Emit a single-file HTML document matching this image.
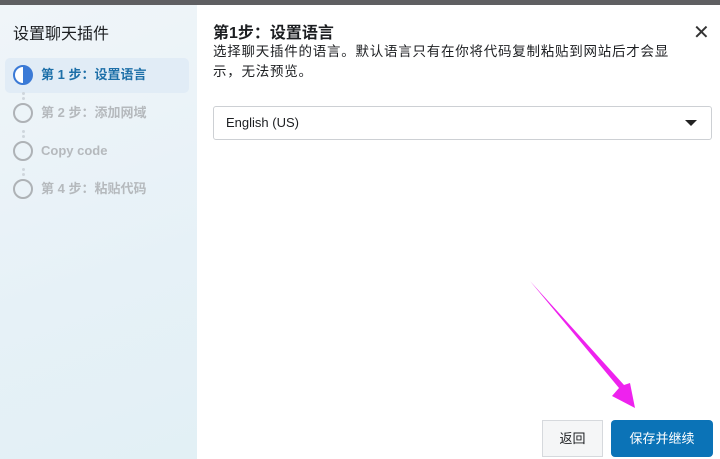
<!DOCTYPE html>
<html><head><meta charset="utf-8"><style>
body{margin:0;width:720px;height:459px;overflow:hidden;font-family:"Liberation Sans","Noto Sans CJK SC",sans-serif;background:#fff;position:relative}
.top{position:absolute;left:0;top:0;width:720px;height:5px;background:#5f5f62}
.side{position:absolute;left:0;top:5px;width:197px;height:454px;background:linear-gradient(160deg,#f0f5f9,#e6f1f7 60%,#e2f0f5)}
.st{position:absolute;left:13px;top:15px;font-size:16px;color:#1c1e21}
.step{position:absolute;left:13px;font-size:13px;font-weight:bold;color:#b5b9bd;height:20px;line-height:20px}
.c{position:absolute;left:0;top:0;width:20px;height:20px;border:2px solid #aeb2b6;border-radius:50%;box-sizing:border-box}
.lbl{position:absolute;left:28px;white-space:nowrap}
.act{position:absolute;left:5px;top:53px;width:184px;height:35px;background:#e1ecf6;border-radius:5px}
.dot{position:absolute;left:22px;width:3px;height:3px;border-radius:50%;background:#cfd6dc}
h1{position:absolute;left:213px;top:19px;margin:0;font-size:16px;font-weight:bold;color:#1c1e21}
.desc{position:absolute;left:213px;top:42px;white-space:nowrap;font-size:13.5px;letter-spacing:0.75px;line-height:20px;color:#1c1e21}
.x{position:absolute;left:693px;top:20px;font-size:20px;color:#333}
.sel{position:absolute;left:213px;top:106px;width:499px;height:34px;border:1px solid #cdd0d4;border-radius:3px;box-sizing:border-box;font-size:13px;color:#1c1e21;line-height:32px;padding-left:12px}
.tri{position:absolute;right:14px;top:13px;width:0;height:0;border-left:6px solid transparent;border-right:6px solid transparent;border-top:6px solid #222}
.b1{position:absolute;left:542px;top:420px;width:61px;height:37px;border:1px solid #d6d9dd;background:#f5f6f7;box-sizing:border-box;font-size:13px;text-align:center;line-height:35px;color:#1c1e21}
.b2{position:absolute;left:611px;top:420px;width:102px;height:37px;background:#0b73b7;border-radius:4px;font-size:13px;text-align:center;line-height:37px;color:#fff}
</style></head><body>
<div class="top"></div>
<div class="side">
<div class="st">设置聊天插件</div>
<div class="act"></div>
<div class="step" style="top:60px;color:#1d6fa8"><div class="c" style="border-color:#3b7ad6;background:linear-gradient(90deg,#fff 50%,#3b7ad6 50%)"></div><span class="lbl">第 1 步：设置语言</span></div>
<div class="dot" style="top:87px"></div><div class="dot" style="top:92px"></div>
<div class="step" style="top:98px"><div class="c"></div><span class="lbl">第 2 步：添加网域</span></div>
<div class="dot" style="top:125px"></div><div class="dot" style="top:130px"></div>
<div class="step" style="top:136px"><div class="c"></div><span class="lbl">Copy code</span></div>
<div class="dot" style="top:163px"></div><div class="dot" style="top:168px"></div>
<div class="step" style="top:174px"><div class="c"></div><span class="lbl">第 4 步：粘贴代码</span></div>
</div>
<h1>第1步：设置语言</h1>
<div class="desc">选择聊天插件的语言。默认语言只有在你将代码复制粘贴到网站后才会显<br>示，无法预览。</div>
<div class="x">✕</div>
<div class="sel">English (US)<div class="tri"></div></div>
<svg style="position:absolute;left:0;top:0" width="720" height="459"><polygon points="530,281 619,388 612,396 635,408 630,383 624,385" fill="#ee22ee"/></svg>
<div class="b1">返回</div>
<div class="b2">保存并继续</div>
</body></html>
